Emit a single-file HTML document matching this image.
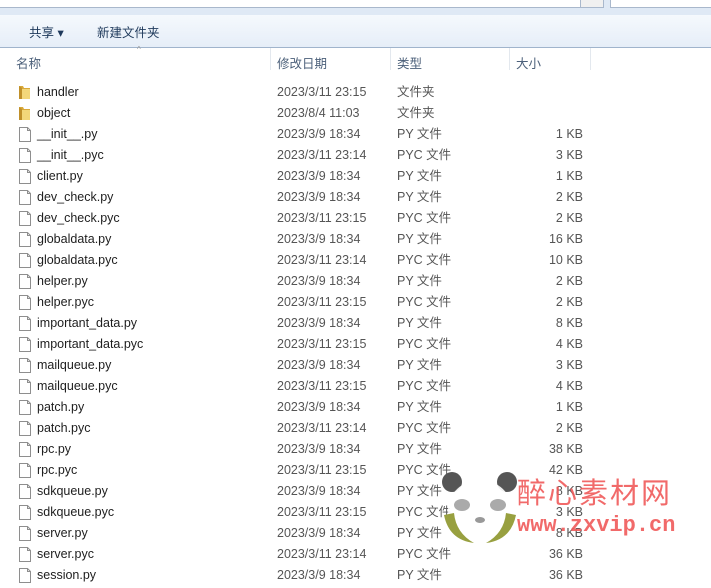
<!DOCTYPE html><html><head><meta charset="utf-8"><style>
body{margin:0;width:711px;height:588px;overflow:hidden;background:#fff;font-family:"Liberation Sans","Noto Sans CJK SC",sans-serif;font-size:12.5px;color:#1e1e1e;position:relative}
.abs{position:absolute}
.row{position:absolute;left:0;width:711px;height:21px;line-height:21px}
.row span{position:absolute;white-space:nowrap}
.n{left:37px}.d{left:277px;color:#555}.t{left:397px;color:#555}.s{right:128px;color:#555}
.ic{left:18px;top:3px;width:13px;height:15px}
</style></head><body>
<div class="abs" style="left:0;top:0;width:711px;height:15px;background:#dfe9f5"></div>
<div class="abs" style="left:0;top:0;width:598px;height:7px;background:#fff;border-bottom:1px solid #a9b8cc"></div>
<div class="abs" style="left:580px;top:0;width:22px;height:7px;background:#f0f0f0;border:1px solid #a9b8cc;border-top:0"></div>
<div class="abs" style="left:610px;top:0;width:101px;height:7px;background:#fff;border-bottom:1px solid #a9b8cc;border-left:1px solid #a9b8cc"></div>
<div class="abs" style="left:0;top:15px;width:711px;height:32px;background:linear-gradient(#f5f9fd,#e6eef8);border-bottom:1px solid #a0b4cc"></div>
<div class="abs" style="left:29px;top:22px;font-size:12.5px;color:#1e395b">共享 ▾</div>
<div class="abs" style="left:97px;top:22px;font-size:12.5px;color:#1e395b">新建文件夹</div>
<div class="abs" style="left:137px;top:45px;font-size:8px;color:#999">^</div>
<div class="abs" style="left:16px;top:53px;color:#4c607a">名称</div>
<div class="abs" style="left:277px;top:53px;color:#4c607a">修改日期</div>
<div class="abs" style="left:397px;top:53px;color:#4c607a">类型</div>
<div class="abs" style="left:516px;top:53px;color:#4c607a">大小</div>
<div class="abs" style="left:270px;top:48px;width:1px;height:22px;background:#e3e8ee"></div>
<div class="abs" style="left:390px;top:48px;width:1px;height:22px;background:#e3e8ee"></div>
<div class="abs" style="left:509px;top:48px;width:1px;height:22px;background:#e3e8ee"></div>
<div class="abs" style="left:590px;top:48px;width:1px;height:22px;background:#e3e8ee"></div>
<div id="rows"></div>
<script>
var r=[["handler","2023/3/11 23:15","文件夹",""],["object","2023/8/4 11:03","文件夹",""],["__init__.py","2023/3/9 18:34","PY 文件","1 KB"],["__init__.pyc","2023/3/11 23:14","PYC 文件","3 KB"],["client.py","2023/3/9 18:34","PY 文件","1 KB"],["dev_check.py","2023/3/9 18:34","PY 文件","2 KB"],["dev_check.pyc","2023/3/11 23:15","PYC 文件","2 KB"],["globaldata.py","2023/3/9 18:34","PY 文件","16 KB"],["globaldata.pyc","2023/3/11 23:14","PYC 文件","10 KB"],["helper.py","2023/3/9 18:34","PY 文件","2 KB"],["helper.pyc","2023/3/11 23:15","PYC 文件","2 KB"],["important_data.py","2023/3/9 18:34","PY 文件","8 KB"],["important_data.pyc","2023/3/11 23:15","PYC 文件","4 KB"],["mailqueue.py","2023/3/9 18:34","PY 文件","3 KB"],["mailqueue.pyc","2023/3/11 23:15","PYC 文件","4 KB"],["patch.py","2023/3/9 18:34","PY 文件","1 KB"],["patch.pyc","2023/3/11 23:14","PYC 文件","2 KB"],["rpc.py","2023/3/9 18:34","PY 文件","38 KB"],["rpc.pyc","2023/3/11 23:15","PYC 文件","42 KB"],["sdkqueue.py","2023/3/9 18:34","PY 文件","8 KB"],["sdkqueue.pyc","2023/3/11 23:15","PYC 文件","3 KB"],["server.py","2023/3/9 18:34","PY 文件","8 KB"],["server.pyc","2023/3/11 23:14","PYC 文件","36 KB"],["session.py","2023/3/9 18:34","PY 文件","36 KB"]];
var h="";r.forEach(function(x,i){var y=82+i*21;var ic=i<2?'<svg class="abs ic" viewBox="0 0 13 15"><path d="M1 1h4l1 2h6v11H1z" fill="#d9a93a"/><path d="M2 4h10v10H2z" fill="#f3d77a"/><path d="M1 1v13h3V3z" fill="#c0902a"/></svg>':'<svg class="abs ic" viewBox="0 0 13 15"><path d="M1.5 .5h8l3 3v11h-11z" fill="#fff" stroke="#8e8e8e"/><path d="M9.5 .5v3h3" fill="none" stroke="#8e8e8e"/></svg>';
h+='<div class="row" style="top:'+y+'px">'+ic+'<span class="n">'+x[0]+'</span><span class="d">'+x[1]+'</span><span class="t">'+x[2]+'</span><span class="s">'+x[3]+'</span></div>';});
document.getElementById("rows").innerHTML=h;
</script>
<svg class="abs" style="left:440px;top:470px" width="80" height="75" viewBox="0 0 80 75">
<circle cx="12" cy="12" r="10" fill="#555"/><circle cx="67" cy="12" r="10" fill="#555"/>
<ellipse cx="40" cy="40" rx="32" ry="30" fill="#fff" opacity=".9"/>
<ellipse cx="22" cy="35" rx="8" ry="6" fill="#aaa"/><ellipse cx="58" cy="35" rx="8" ry="6" fill="#aaa"/>
<ellipse cx="40" cy="50" rx="5" ry="3" fill="#999"/>
<path d="M4 45q5 25 30 28q-18-10-20-30z" fill="#98a040"/><path d="M76 45q-5 25-30 28q18-10 20-30z" fill="#98a040"/>
</svg>
<div class="abs" style="left:517px;top:474px;font-size:29px;line-height:34px;color:#f05a5a;letter-spacing:2px;font-family:'Noto Sans CJK SC',sans-serif;opacity:.9">醉心素材网</div>
<div class="abs" style="left:517px;top:512px;font-size:22px;line-height:28px;color:#f05a5a;font-family:'Liberation Mono',monospace;opacity:.9;font-weight:bold">www.zxvip.cn</div>
</body></html>
